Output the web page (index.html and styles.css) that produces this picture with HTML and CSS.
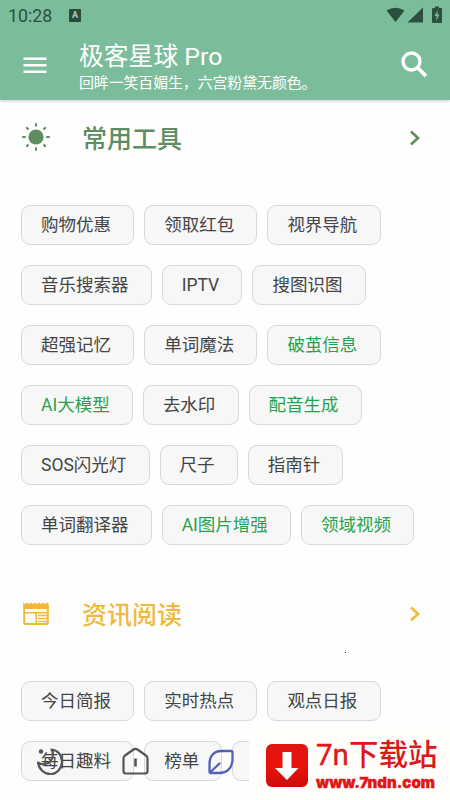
FILE: index.html
```html
<!DOCTYPE html>
<html lang="zh-CN">
<head>
<meta charset="utf-8">
<title>极客星球 Pro</title>
<link rel="stylesheet" href="styles.css">
</head>
<body>
<div class="screen">
  <header class="top">
    <div class="status">
      <span class="clock">10:28</span>
      <span class="ime">A</span>
      <svg class="signals" width="60" height="20" viewBox="0 0 60 20" fill="#2d4f3e">
        <path d="M1.500 4.500Q10.500 -1 19.500 4.500L10.500 16Z"/>
        <path d="M22.500 16.500L38 1.500V16.500Z"/>
        <path d="M50 .5h4v1.500h2q1 0 1 1v13q0 1-1 1h-8q-1 0-1-1v-13q0-1 1-1h2z"/>
        <path d="M53 4l-3.500 6h2.200l-.7 5 3.500-6.500h-2.200z" fill="#7bbd9a"/>
      </svg>
    </div>
    <div class="appbar">
      <svg class="menu" width="24" height="18" viewBox="0 0 24 18" fill="#fff"><path d="M.5 1.500h23v2.500H.5zM.5 8h23v2.500H.5zM.5 14.500h23V17H.5z"/></svg>
      <div class="titles">
        <h1>极客星球 Pro</h1>
        <p>回眸一笑百媚生，六宫粉黛无颜色。</p>
      </div>
      <svg class="search" width="28" height="28" viewBox="0 0 28 28" fill="none" stroke="#fff"><circle cx="11.500" cy="10.500" r="8.500" stroke-width="3.300"/><path d="M17.500 16.500L26 25" stroke-width="3.800"/></svg>
    </div>
  </header>
  <main>
    <section>
      <div class="heading tools">
        <svg class="symbol" width="30" height="30" viewBox="0 0 30 30"><circle cx="15" cy="15" r="7.600" fill="currentColor"/><g stroke="currentColor" stroke-width="2"><path d="M15 1.200v3.400M15 25.400v3.400M1.200 15h3.600M25.200 15h3.600M5.300 5.300l2.200 2.200M22.500 22.500l2.200 2.200M24.700 5.300l-2.200 2.200M7.500 22.500l-2.200 2.200"/></g></svg>
        <h2>常用工具</h2>
        <svg class="arrow" width="12" height="18" viewBox="0 0 12 18" fill="none" stroke="currentColor" stroke-width="2.600"><path d="M2 2.500l7 6.500-7 6.500"/></svg>
      </div>
      <div class="rows">
        <div class="row"><span>购物优惠</span><span>领取红包</span><span>视界导航</span></div>
        <div class="row"><span>音乐搜索器</span><span>IPTV</span><span>搜图识图</span></div>
        <div class="row"><span>超强记忆</span><span>单词魔法</span><span class="hot">破茧信息</span></div>
        <div class="row"><span class="hot">AI大模型</span><span>去水印</span><span class="hot">配音生成</span></div>
        <div class="row"><span>SOS闪光灯</span><span>尺子</span><span>指南针</span></div>
        <div class="row"><span>单词翻译器</span><span class="hot">AI图片增强</span><span class="hot">领域视频</span></div>
      </div>
    </section>
    <section>
      <div class="heading news">
        <svg class="symbol" width="30" height="30" viewBox="0 0 30 30"><path d="M2.200 3.500l1.800 1.500 2-1.500 2 1.500 2-1.500 2 1.500 2-1.500 2 1.500 2-1.500 2 1.500 2-1.500 2 1.500 2-1.500 1.800 1V10H2.200z" fill="currentColor"/><g fill="none" stroke="currentColor"><path d="M3.200 8v15.500q0 1.500 1.500 1.500h20.600q1.500 0 1.500-1.500V8" stroke-width="2"/><path d="M3 13.700h24M15.200 13v11" stroke-width="1.600"/><path d="M17 16.500h9M17 19.500h9M17 22.500h9" stroke-width="1.700"/></g></svg>
        <h2>资讯阅读</h2>
        <svg class="arrow" width="12" height="18" viewBox="0 0 12 18" fill="none" stroke="currentColor" stroke-width="2.600"><path d="M2 2.500l7 6.500-7 6.500"/></svg>
      </div>
      <div class="rows">
        <div class="row"><span>今日简报</span><span>实时热点</span><span>观点日报</span></div>
        <div class="row"><span>每日趣料</span><span>榜单</span><span>生活</span></div>
      </div>
    </section>
  </main>
  <i class="speck"></i>
  <nav class="tabs">
    <svg width="28" height="30" viewBox="0 0 28 30" fill="none" stroke="#555" stroke-width="2.200" stroke-linejoin="round"><path d="M15.500 3.500C21.500 4 26 9 26 15.500C26 22 21 28 14.500 28C8 28 3 23 2 16.500C6 19.500 11.500 18.500 14.500 15C17.500 11.500 17.500 7 15.500 3.500Z"/><circle cx="5" cy="5.500" r="2.200" fill="#555" stroke="none"/></svg>
    <svg width="28" height="30" viewBox="0 0 28 30" fill="none" stroke="#555" stroke-width="2.200" stroke-linejoin="round"><path d="M3 9.500Q1.500 10.500 1.500 12.500V25q0 2.500 2.500 2.500h19q2.500 0 2.500-2.500V12.500q0-2-1.500-3L15.500 3.500q-2-1.300-4 0z"/><path d="M13.500 12.500v8" stroke-width="2.600"/></svg>
    <svg width="28" height="30" viewBox="0 0 28 30" fill="none" stroke="#5360b8" stroke-width="2.300" stroke-linejoin="round" stroke-linecap="round"><path d="M14 5h10q1.500 0 1.500 1.500V13C25.500 22 20 27 12 27H4q-1.500 0-1.500-1.500V18C2.500 10 7 5 14 5ZM4 25.500l8.500-8"/></svg>
  </nav>
  <aside class="brand">
    <svg width="44" height="44" viewBox="0 0 44 44"><defs><linearGradient id="red" x2="0" y2="1"><stop stop-color="#dc1613"/><stop offset=".5" stop-color="#ec120c"/><stop offset="1" stop-color="#c90d0b"/></linearGradient></defs><rect x="1" y="1" width="42" height="43" rx="6" fill="url(#red)"/><path d="M17.500 9h9v16h7L22 37 10 25h7.500z" fill="#fff"/></svg>
    <div class="brand-text"><b><span class="latin">7n</span>下载站</b><strong>www.7ndn.com</strong></div>
  </aside>
</div>
</body>
</html>
```

FILE: styles.css
```css
* { box-sizing: border-box; }
body { margin: 0; font-family: Roboto, "Noto Sans CJK SC", sans-serif; }
h1, h2, p { margin: 0; font-weight: 400; }
svg { display: block; flex: none; }
.screen { position: relative; width: 450px; height: 800px; overflow: hidden; background: #fefefe; }
.top { height: 100px; background: #7bbd9a; box-shadow: 0 1px 3px rgba(0, 0, 0, .22); }
.status { height: 30px; display: flex; align-items: center; padding: 0 6px 0 8px; color: #2d4f3e; }
.clock { width: 61px; font-size: 17.8px; line-height: 32px; padding-top: 2px; }
.ime { width: 12px; height: 13px; border-radius: 1px; background: #294b39; color: #a6cfb8; font-size: 9px; line-height: 13px; font-weight: 700; text-align: center; }
.signals { margin-left: auto; margin-top: 1px; transform: translateX(1px); }
.appbar { height: 70px; display: flex; align-items: center; padding: 0 22px 0 23px; color: #fff; }
.titles { margin-left: 32px; flex: 1; }
h1 { font-size: 24.8px; line-height: 30px; margin-top: 5px; white-space: nowrap; }
.titles p { font-size: 14.95px; line-height: 20px; margin-top: 1px; letter-spacing: -.1px; white-space: nowrap; }
.heading { height: 76px; display: flex; align-items: center; padding: 0 29px 0 21px; }
.tools .symbol { margin-top: -3px; }
.tools .arrow { margin-top: -1px; }
h2 { font-size: 25px; font-weight: 500; line-height: 36px; margin: 4px 0 0 31px; flex: 1; }
.tools { color: #5d8d60; }
.news { color: #f1b93a; height: 77px; }
.rows { padding: 29px 0 30px 21px; display: flex; flex-direction: column; gap: 20px; }
.row { display: flex; gap: 10px; height: 40px; }
.row span { flex: none; padding: 0 22.2px 0 19px; border: 1px solid #d8d8d8; border-radius: 9px; background: #f7f7f7; color: #444; font-size: 17.5px; line-height: 39px; white-space: nowrap; }
.row .hot { color: #27a34b; }
.speck { position: absolute; left: 345px; top: 652px; width: 1px; height: 1px; background: #111; }
.tabs { position: absolute; left: 36px; top: 746px; display: flex; gap: 57.500px; }
.brand { position: absolute; left: 249px; top: 724px; width: 201px; height: 76px; display: flex; padding: 19px 0 0 16px; background: #fffefb; color: #df1717; }
.brand-text { margin: -7px 0 0 7px; display: flex; flex-direction: column; white-space: nowrap; }
.brand b { font-size: 29.500px; line-height: 38px; font-weight: 500; }
.latin { display: inline-block; font-weight: 400; -webkit-text-stroke: .4px #df1717; }
.brand strong { font-family: Inter, sans-serif; font-weight: 900; font-size: 15px; line-height: 18px; -webkit-text-stroke: .4px #df1717; }
```
